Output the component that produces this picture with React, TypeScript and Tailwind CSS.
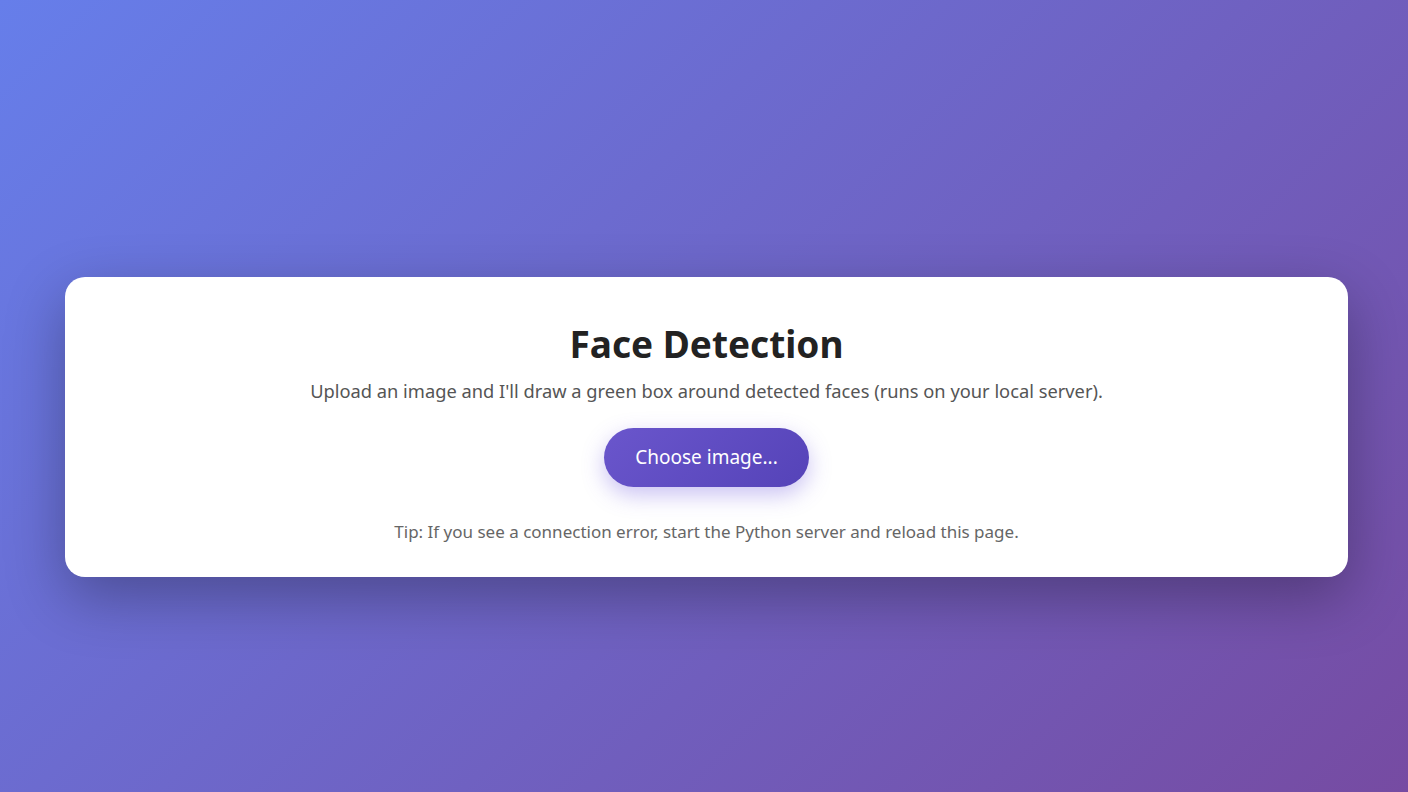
import React from 'react';

const App: React.FC = () => {
  return (
    <div
      className="min-h-screen w-full flex items-center justify-center pl-[65px] pr-[60px] pt-[62px] bg-[linear-gradient(135deg,#667eea_0%,#764ba2_100%)]"
      style={{ fontFamily: '"Noto Sans", "Open Sans", sans-serif' }}
    >
      <div className="w-full bg-white rounded-[20px] shadow-[0_20px_60px_rgba(0,0,0,0.3)] px-8 pt-[45px] pb-[33px] flex flex-col items-center text-center">
        <h1 className="text-[37px] leading-[44px] font-bold text-[#222]">Face Detection</h1>
        <p className="mt-[12px] text-[18.3px] leading-[26px] text-[#555]">
          Upload an image and I'll draw a green box around detected faces (runs on your local server).
        </p>
        <button className="mt-[24px] h-[59px] px-[31px] rounded-full text-white text-[19px] bg-[linear-gradient(135deg,#6a56cc_0%,#5543b8_100%)] shadow-[0_8px_22px_rgba(102,80,220,0.35)]">
          Choose image...
        </button>
        <p className="mt-[32px] text-[17px] leading-[25px] text-[#666]">
          Tip: If you see a connection error, start the Python server and reload this page.
        </p>
      </div>
    </div>
  );
};

export default App;
